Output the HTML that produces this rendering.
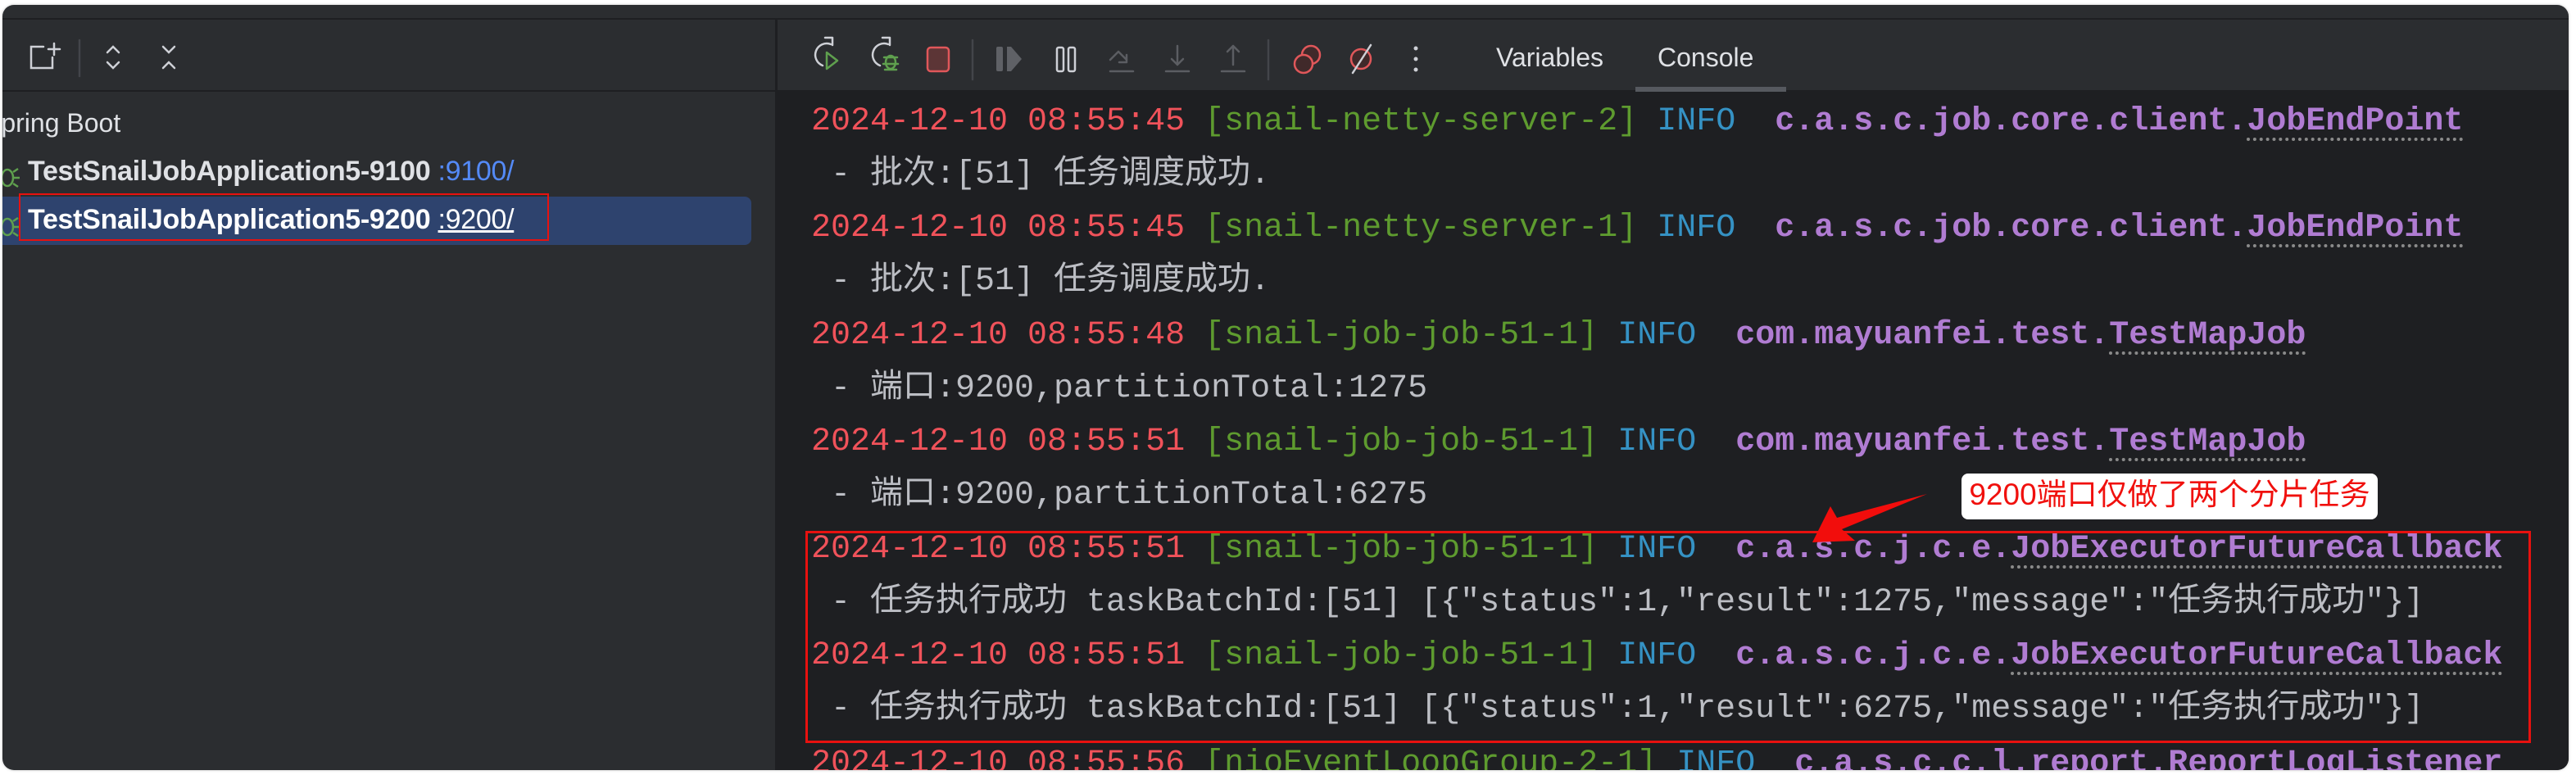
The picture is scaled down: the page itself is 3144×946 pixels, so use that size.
<!DOCTYPE html>
<html><head><meta charset="utf-8"><style>
html,body{margin:0;padding:0;background:#fff;width:3144px;height:946px;overflow:hidden}
.win{position:absolute;left:3px;top:6px;width:3132px;height:934px;border-radius:14px;background:#2b2d30;overflow:hidden;box-shadow:0 0 3px rgba(0,0,0,.25)}
.abs{position:absolute}
.mono{font-family:"Liberation Mono","Noto Sans CJK SC",monospace;font-size:40px;white-space:pre;line-height:50px}
.r{color:#f0525a}.g{color:#5e9b2f}.b{color:#3592c4}.p{color:#b07cd2;font-weight:bold}.t{color:#bcbec4}
.u{text-decoration:underline dotted #8a8a8a;text-underline-offset:10px;text-decoration-thickness:4px}
.sans{font-family:"Liberation Sans",sans-serif;white-space:nowrap}
</style></head><body>
<div class="win">
  <div class="abs" style="left:0;top:16px;width:3132px;height:2px;background:#1e1f22"></div>
  <div class="abs" style="left:0;top:104px;width:3132px;height:2px;background:#1e1f22"></div>
  <div class="abs" style="left:943px;top:18px;width:3px;height:916px;background:#1e1f22"></div>
  <div class="abs" style="left:946px;top:106px;width:2186px;height:828px;background:#1e1f22"></div>

  <svg class="abs" style="left:0;top:18px" width="260" height="86" viewBox="0 0 260 86" fill="none" stroke="#ced0d6" stroke-width="2.5" stroke-linecap="round">
    <path d="M50 33 H35 V59 H61 V46"/><path d="M63 29 V43 M56 36 H70"/>
    <line x1="94" y1="25" x2="94" y2="69" stroke="#43454a"/>
    <path d="M128 40 L135 33 L142 40 M128 52 L135 59 L142 52"/>
    <path d="M196 33 L203 40 L210 33 M196 59 L203 52 L210 59"/>
  </svg>

  <div class="abs sans" style="left:-23px;top:126px;font-size:32px;color:#dfe1e5">Spring Boot</div>
  <svg class="abs" style="left:-6px;top:192px" width="30" height="34" viewBox="0 0 30 34" fill="none" stroke="#5fa04e" stroke-width="2.5"><ellipse cx="12" cy="19" rx="7" ry="10"/><path d="M19 12 L25 8 M19 19 H27 M19 26 L25 30"/></svg>
  <div class="abs sans" style="left:31px;top:184px;font-size:34px;font-weight:bold;color:#dfe1e5;letter-spacing:-0.3px">TestSnailJobApplication5-9100 <span style="font-weight:normal;color:#548af7">:9100/</span></div>
  <div class="abs" style="left:-8px;top:234px;width:922px;height:59px;border-radius:8px;background:#2e436e"></div>
  <svg class="abs" style="left:-6px;top:252px" width="30" height="34" viewBox="0 0 30 34" fill="none" stroke="#5fa04e" stroke-width="2.5"><ellipse cx="12" cy="19" rx="7" ry="10"/><path d="M19 12 L25 8 M19 19 H27 M19 26 L25 30"/></svg>
  <div class="abs sans" style="left:31px;top:243px;font-size:34px;font-weight:bold;color:#fff;letter-spacing:-0.3px">TestSnailJobApplication5-9200 <span style="font-weight:normal;text-decoration:underline">:9200/</span></div>
  <div class="abs" style="left:20px;top:230px;width:643px;height:54px;border:2px solid #e8110f"></div>

  <svg class="abs" style="left:943px;top:18px" width="820" height="86" viewBox="943 18 820 86" fill="none" stroke-width="2.5" stroke-linecap="round" stroke-linejoin="round">
    <g stroke="#ced0d6"><path d="M1011 48 A13 13 0 1 0 1001 74"/><path d="M1004 40 H1013 V49"/></g>
    <path d="M1006 58 L1019 68 L1006 78 Z" stroke="#5fa04e"/>
    <g stroke="#ced0d6"><path d="M1081 48 A13 13 0 1 0 1071 74"/><path d="M1074 40 H1083 V49"/></g>
    <g stroke="#5fa04e"><ellipse cx="1084" cy="70" rx="6" ry="8" fill="#2f3e2b"/><path d="M1076 64 L1092 64 M1075 72 H1093 M1077 79 L1091 79"/></g>
    <rect x="1129" y="52" width="26" height="29" rx="4" fill="#5c3536" stroke="#e0575a"/>
    <line x1="1184" y1="43" x2="1184" y2="91" stroke="#43454a"/>
    <rect x="1213" y="51" width="8" height="30" rx="2" fill="#5f6166" stroke="none"/>
    <path d="M1226 51 H1231 L1244 66 L1231 81 H1226 Z" fill="#5f6166" stroke="none"/>
    <rect x="1287" y="52" width="8" height="29" rx="2" stroke="#ced0d6"/><rect x="1301" y="52" width="8" height="29" rx="2" stroke="#ced0d6"/>
    <g stroke="#5b5d62"><path d="M1352 67 L1362 57 L1372 67 M1372 61 V70 H1363"/><path d="M1352 81 H1380"/>
    <path d="M1434 50 V73 M1427 66 L1434 73 L1441 66 M1420 81 H1448"/>
    <path d="M1502 73 V50 M1495 57 L1502 50 L1509 57 M1488 81 H1516"/></g>
    <line x1="1545" y1="43" x2="1545" y2="91" stroke="#43454a"/>
    <circle cx="1597" cy="61" r="11" fill="#40292a" stroke="#e0575a"/><circle cx="1588" cy="72" r="11" fill="#40292a" stroke="#e0575a"/>
    <circle cx="1658" cy="66" r="12" fill="#40292a" stroke="#e0575a"/><path d="M1648 83 L1670 49" stroke="#ced0d6"/>
    <g fill="#ced0d6" stroke="none"><circle cx="1725" cy="53" r="2.5"/><circle cx="1725" cy="66" r="2.5"/><circle cx="1725" cy="79" r="2.5"/></g>
  </svg>
  <div class="abs sans" style="left:1823px;top:46px;font-size:32px;color:#dfe1e5">Variables</div>
  <div class="abs sans" style="left:2020px;top:46px;font-size:32px;color:#dfe1e5">Console</div>
  <div class="abs" style="left:1993px;top:100px;width:184px;height:6px;background:#56595f"></div>
</div>

<div class="abs mono" style="left:990px;top:124px"><span class="r">2024-12-10 08:55:45</span> <span class="g">[snail-netty-server-2]</span> <span class="b">INFO</span>  <span class="p">c.a.s.c.job.core.client.<span class="u">JobEndPoint</span></span></div>
<div class="abs mono t" style="left:990px;top:189px"> - 批次:[51] 任务调度成功.</div>
<div class="abs mono" style="left:990px;top:254px"><span class="r">2024-12-10 08:55:45</span> <span class="g">[snail-netty-server-1]</span> <span class="b">INFO</span>  <span class="p">c.a.s.c.job.core.client.<span class="u">JobEndPoint</span></span></div>
<div class="abs mono t" style="left:990px;top:319px"> - 批次:[51] 任务调度成功.</div>
<div class="abs mono" style="left:990px;top:385px"><span class="r">2024-12-10 08:55:48</span> <span class="g">[snail-job-job-51-1]</span> <span class="b">INFO</span>  <span class="p">com.mayuanfei.test.<span class="u">TestMapJob</span></span></div>
<div class="abs mono t" style="left:990px;top:450px"> - 端口:9200,partitionTotal:1275</div>
<div class="abs mono" style="left:990px;top:515px"><span class="r">2024-12-10 08:55:51</span> <span class="g">[snail-job-job-51-1]</span> <span class="b">INFO</span>  <span class="p">com.mayuanfei.test.<span class="u">TestMapJob</span></span></div>
<div class="abs mono t" style="left:990px;top:580px"> - 端口:9200,partitionTotal:6275</div>
<div class="abs mono" style="left:990px;top:646px"><span class="r">2024-12-10 08:55:51</span> <span class="g">[snail-job-job-51-1]</span> <span class="b">INFO</span>  <span class="p">c.a.s.c.j.c.e.<span class="u">JobExecutorFutureCallback</span></span></div>
<div class="abs mono t" style="left:990px;top:711px"> - 任务执行成功 taskBatchId:[51] [{"status":1,"result":1275,"message":"任务执行成功"}]</div>
<div class="abs mono" style="left:990px;top:776px"><span class="r">2024-12-10 08:55:51</span> <span class="g">[snail-job-job-51-1]</span> <span class="b">INFO</span>  <span class="p">c.a.s.c.j.c.e.<span class="u">JobExecutorFutureCallback</span></span></div>
<div class="abs mono t" style="left:990px;top:841px"> - 任务执行成功 taskBatchId:[51] [{"status":1,"result":6275,"message":"任务执行成功"}]</div>
<div class="abs" style="left:946px;top:908px;width:2189px;height:32px;overflow:hidden">
  <div class="abs mono" style="left:44px;top:0px"><span class="r">2024-12-10 08:55:56</span> <span class="g">[nioEventLoopGroup-2-1]</span> <span class="b">INFO</span>  <span class="p">c.a.s.c.c.l.report.ReportLogListener</span></div>
</div>

<div class="abs" style="left:983px;top:648px;width:2100px;height:253px;border:3px solid #e8110f"></div>
<div class="abs" style="left:2394px;top:578px;width:508px;height:56px;background:#fff;border-radius:8px"></div>
<div class="abs" style="left:2394px;top:581px;width:508px;text-align:center;font-family:'Liberation Sans','Noto Sans CJK SC',sans-serif;font-size:37px;color:#f0100d;line-height:46px;white-space:nowrap">9200端口仅做了两个分片任务</div>
<svg class="abs" style="left:0;top:0" width="3144" height="946"><polygon points="2352,603 2248,646 2264,660 2212,662 2234,618 2242,632" fill="#f20d0c"/></svg>
</body></html>
